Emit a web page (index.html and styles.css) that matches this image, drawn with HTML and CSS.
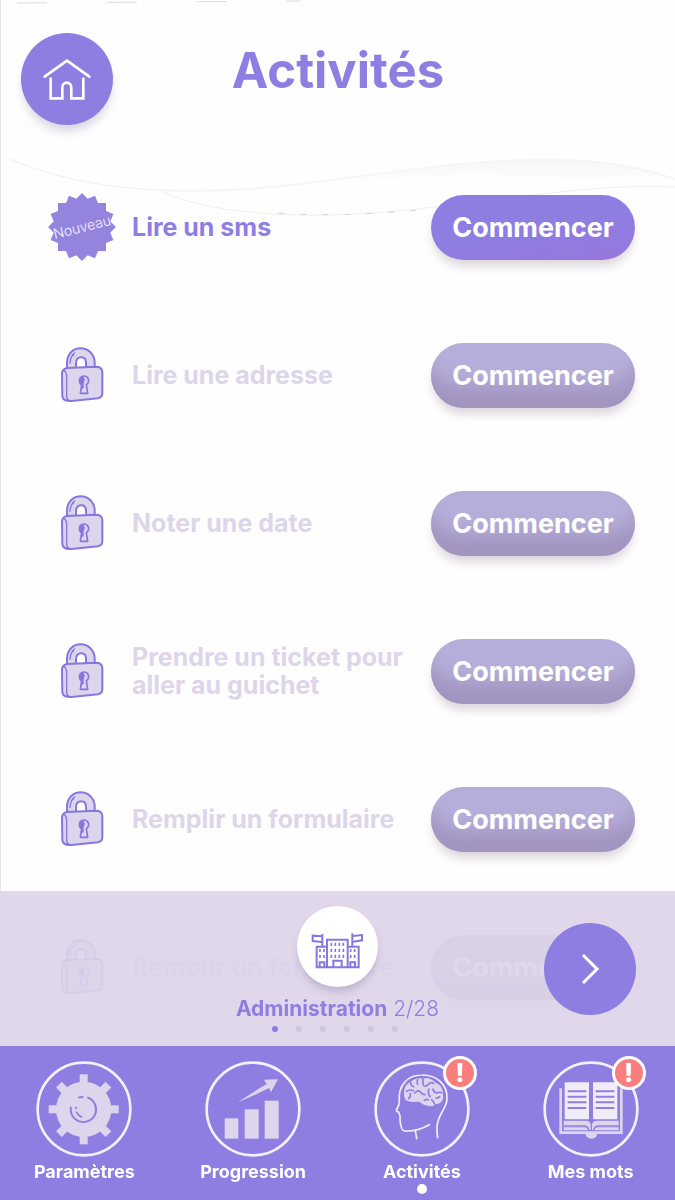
FILE: index.html
```html
<!DOCTYPE html>
<html lang="fr">

<head>
<meta charset="utf-8" />
<meta name="viewport" content="width=device-width, initial-scale=1" />
<title>Activités</title>
<link rel="stylesheet" href="styles.css">
</head>

<body>

<!-- shared symbols -->
<svg class="symbols" aria-hidden="true">
    <symbol id="lock" viewBox="30 36 132 168">
        <g stroke="#8676dd" stroke-width="6" stroke-linejoin="round" stroke-linecap="round">
            <path fill="#ddd5ec" fill-rule="evenodd" d="M51 99V82C52 56 70 40 92 40S132 56 134 80V96H108V84C108 72 102 67 94 67S78 72 78 86V98Z" />
            <path fill="none" stroke-width="4" d="M60 85C61 69 67 59 74 54M70 62V60" />
            <path fill="#ddd5ec" d="M36 118Q36 102 50 99L138 95Q155 95 157 110V175Q157 188 144 190L64 198Q39 199 37 184Z" />
            <path fill="none" stroke-width="4" d="M42 106Q50 112 50 124V184Q51 196 62 199" />
            <path fill="#ddd5ec" stroke-width="5" d="M95 149A14 14 0 1 1 109 149L113 175H91Z" />
            <path fill="#8676dd" stroke="none" d="M95 151A15 15 0 0 1 99 123Q108 133 101 144V160L93 162Z" />
        </g>
    </symbol>
</svg>

<header class="header">
    <svg class="wave" viewBox="0 0 675 230" preserveAspectRatio="none" aria-hidden="true">
        <defs>
            <linearGradient id="fade" x1="0" y1="0" x2="0" y2="1">
                <stop offset="0" stop-color="#f7f7f7" />
                <stop offset="0.7" stop-color="#fefefe" />
            </linearGradient>
        </defs>
        <path fill="url(#fade)" d="M158 190C250 194 310 182 360 176C470 162 580 146 675 179V187C560 180 460 164 340 188C270 194 210 196 158 190Z" />
        <path fill="none" stroke="#f5f5f5" stroke-width="2" d="M158 190C250 194 310 182 360 176C470 162 580 146 675 179" />
        <path fill="none" stroke="#efefef" d="M8 159C60 180 110 188 158 190C200 211 270 216 330 215C450 212 570 182 675 187" />
        <path fill="none" stroke="#d4d4d4" stroke-dasharray="6 16" d="M278 213C310 216 370 215 430 209" />
        <path fill="none" stroke="#dadada" stroke-dasharray="30 60" d="M16 3L300 1" />
    </svg>
    <a class="round home" href="#" aria-label="Accueil">
        <svg viewBox="62 98 276 278" aria-hidden="true">
            <g fill="none" stroke="#ffffff" stroke-width="8" stroke-linecap="round" stroke-linejoin="round">
                <path d="M133 229L200 181L267 229" />
                <path stroke-linejoin="miter" d="M151 235V294H186V262C186 242 213 242 213 262V294H249V235" />
            </g>
        </svg>
    </a>
    <h1 class="title">Activités</h1>
</header>

<main>
    <ul class="activities">
        <li class="activity active">
            <svg class="nouveau" viewBox="-34 -34 68 68">
                <g fill="#9484de">
                    <rect x="-24" y="-24" width="48" height="48" />
                    <rect x="-24" y="-24" width="48" height="48" transform="rotate(22.5)" />
                    <rect x="-24" y="-24" width="48" height="48" transform="rotate(45)" />
                    <rect x="-24" y="-24" width="48" height="48" transform="rotate(67.5)" />
                </g>
                <text class="nouveau-text" x="0" y="5" text-anchor="middle" transform="rotate(-14)">Nouveau</text>
            </svg>
            <span class="name">Lire un sms</span>
            <button class="start" type="button">Commencer</button>
        </li>
        <li class="activity">
            <svg class="lock" aria-hidden="true"><use href="#lock" /></svg>
            <span class="name">Lire une adresse</span>
            <button class="start" type="button" disabled>Commencer</button>
        </li>
        <li class="activity">
            <svg class="lock" aria-hidden="true"><use href="#lock" /></svg>
            <span class="name">Noter une date</span>
            <button class="start" type="button" disabled>Commencer</button>
        </li>
        <li class="activity">
            <svg class="lock" aria-hidden="true"><use href="#lock" /></svg>
            <span class="name">Prendre un ticket pour aller au guichet</span>
            <button class="start" type="button" disabled>Commencer</button>
        </li>
        <li class="activity">
            <svg class="lock" aria-hidden="true"><use href="#lock" /></svg>
            <span class="name">Remplir un formulaire</span>
            <button class="start" type="button" disabled>Commencer</button>
        </li>
        <li class="activity">
            <svg class="lock" aria-hidden="true"><use href="#lock" /></svg>
            <span class="name">Remplir un formulaire</span>
            <button class="start" type="button" disabled>Commencer</button>
        </li>
    </ul>
</main>

<div class="bottom">
    <section class="category">
        <div class="category-info">
            <svg class="category-icon" viewBox="21 31 243 243" aria-hidden="true">
                <g fill="none" stroke="#8676dd" stroke-width="6">
                    <path d="M111 215V132H173V215M80 215V153H111M173 153H206V215M77 215H209" />
                    <path d="M97 153V115M95 122L68 120V136L95 139" />
                    <path d="M187 153V113M189 121L216 118V134L189 138" />
                    <path d="M130 214V195H155V214M89 214V200H103V214M181 214V200H195V214" />
                    <path stroke-width="5" stroke-dasharray="10 8" d="M124 141V192M136 141V192M148 141V192M160 141V192" />
                    <path stroke-width="5" stroke-dasharray="9 9" d="M90 160V190M102 160V190M182 160V190M194 160V190" />
                </g>
            </svg>
            <p class="category-name"><strong>Administration</strong> 2/28</p>
            <div class="dots">
                <span class="dot current"></span>
                <span class="dot"></span>
                <span class="dot"></span>
                <span class="dot"></span>
                <span class="dot"></span>
                <span class="dot"></span>
            </div>
        </div>
        <button class="round next" type="button" aria-label="Suivant">
            <svg viewBox="0 0 92 92" aria-hidden="true">
                <path fill="none" stroke="#ffffff" stroke-width="3" d="M39 32L53 46L39 60" />
            </svg>
        </button>
    </section>

    <nav class="tabs">
        <a class="tab" href="#">
            <span class="tab-icon">
                <svg viewBox="49 32 288 288" aria-hidden="true">
                    <circle class="ring" cx="193" cy="176" r="139" />
                    <g fill="#ddd5ec">
                        <circle cx="192" cy="177" r="83" />
                        <g id="teeth">
                            <rect x="180" y="72" width="24" height="210" />
                            <rect x="87" y="165" width="210" height="24" />
                        </g>
                        <use href="#teeth" transform="rotate(45 192 177)" />
                    </g>
                    <path fill="none" stroke="#8e7ee2" stroke-width="6" d="M154 169A38 38 0 1 0 203 141M176 142Q184 139 191 140" />
                    <path fill="none" stroke="#8e7ee2" stroke-width="5" d="M169 169V176M170 184Q176 198 188 200" />
                </svg>
            </span>
            Paramètres
        </a>
        <a class="tab" href="#">
            <span class="tab-icon">
                <svg viewBox="75 32 288 288" aria-hidden="true">
                    <circle class="ring" cx="219" cy="176" r="139" />
                    <g fill="#ddd5ec">
                        <rect x="134" y="204" width="41" height="61" />
                        <rect x="194" y="177" width="42" height="88" />
                        <rect x="254" y="151" width="42" height="114" />
                        <path d="M174 156Q220 124 260 101L252 88L294 87L273 125L267 113Q222 136 174 156Z" />
                    </g>
                </svg>
            </span>
            Progression
        </a>
        <a class="tab selected" href="#" aria-current="page">
            <span class="tab-icon">
                <svg viewBox="71 32 288 288" aria-hidden="true">
                    <circle class="ring" cx="215" cy="176" r="139" />
                    <path fill="none" stroke="#f3effb" stroke-width="5" stroke-linecap="round" stroke-linejoin="round" d="M147 151C143 105 172 74 214 74C259 73 292 103 290 145C289 178 262 190 260 229Q259 247 262 262M147 151C148 164 143 170 138 179Q138 184 145 185Q151 197 149 207Q149 218 153 230Q154 244 172 242Q205 241 237 223M195 240L199 265" />
                    <path fill="#ddd5ec" d="M163 143C156 120 166 100 180 96C190 83 207 82 218 85C235 79 247 88 254 96C270 102 280 117 277 131C283 148 272 162 256 161Q249 170 237 167C224 166 216 162 208 155C195 153 184 158 172 151Q164 151 163 143Z" />
                    <path fill="none" stroke="#8e7ee2" stroke-width="5" stroke-linecap="round" d="M181 97Q181 106 190 109M169 123Q177 116 189 121M175 145Q182 138 180 130M202 88Q199 95 202 102M193 128Q204 117 210 125T224 133M218 87V103Q224 113 234 102Q243 94 250 99M236 116Q231 127 239 139M248 116Q250 127 260 128Q268 124 274 127M222 150Q230 145 234 149M252 160Q249 151 244 148M257 143Q263 144 268 139" />
                </svg>
                <span class="alert">!</span>
            </span>
            Activités
        </a>
        <a class="tab" href="#">
            <span class="tab-icon">
                <svg viewBox="53 32 288 288" aria-hidden="true">
                    <circle class="ring" cx="197" cy="176" r="139" />
                    <path fill="#ddd5ec" d="M180 249H216Q214 265 198 265Q183 265 180 249Z" />
                    <path fill="none" stroke="#ddd5ec" stroke-width="8" d="M106 114V247H288V114" />
                    <path fill="#f0ecf8" d="M118 96H191V207H118ZM203 96H276V207H203Z" />
                    <path fill="#ddd5ec" d="M115 211H180Q196 211 196 224V239H190Q188 229 180 229H115ZM280 211H216Q200 211 200 224V239H206Q208 229 216 229H280Z" />
                    <path fill="#ddd5ec" d="M115 231H178Q187 231 189 240H115ZM280 231H218Q208 231 206 240H280Z" />
                    <path stroke="#8e7ee2" stroke-width="4" fill="none" d="M115 227H178Q188 228 190 239M280 227H218Q207 228 205 239" />
                    <path stroke="#8e7ee2" stroke-width="6" d="M127 123H183M127 139H183M127 156H183M127 173H183M211 123H267M211 139H267M211 156H267M211 173H267" />
                </svg>
                <span class="alert">!</span>
            </span>
            Mes mots
        </a>
    </nav>
</div>

</body>
</html>
```
FILE: styles.css
```css
* {
    box-sizing: border-box;
}

body {
    margin: 0;
    min-height: 100vh;
    border-left: 1px solid #e4e4e4;
    background: #fefefe;
    color: #8e7ee2;
    font-family: Inter, "Open Sans", Arial, sans-serif;
}

svg {
    display: block;
}

.symbols {
    position: absolute;
    width: 0;
    height: 0;
}

/* Header */

.header {
    position: relative;
    display: grid;
    grid-template-columns: 1fr auto 1fr;
    align-items: start;
    height: 153px;
    padding: 33px 20px 0;
}

.wave {
    position: absolute;
    top: 0;
    left: 0;
    width: 100%;
    height: 230px;
}

.round {
    position: relative;
    display: block;
    width: 92px;
    height: 92px;
    padding: 0;
    border: 0;
    border-radius: 50%;
    background: #8e7ee2;
}

.home {
    box-shadow: 0 8px 10px -2px rgba(60, 50, 110, 0.2);
}

.title {
    position: relative;
    margin: 0;
    font-size: 49px;
    font-weight: 700;
    line-height: 76px;
}

/* List of activities */

.activities {
    margin: 0;
    padding: 0 40px;
    list-style: none;
}

.activity {
    position: relative;
    display: grid;
    grid-template-columns: 82px 1fr 204px;
    column-gap: 9px;
    align-items: center;
    height: 148px;
    color: #ddd5ea;
}

.activity.active {
    color: #8e7ee2;
}

.lock {
    justify-self: center;
    width: 44px;
    height: 56px;
}

.nouveau {
    justify-self: center;
    width: 68px;
    height: 68px;
}

.nouveau-text {
    fill: #f3effb;
    font-size: 14px;
    font-weight: 300;
}

.name {
    font-size: 25px;
    font-weight: 700;
    line-height: 28px;
}

.start {
    height: 65px;
    padding: 0;
    border: 0;
    border-radius: 33px;
    background: linear-gradient(170deg, #8e7ee2 50%, #9478de 85%, #9d74d4);
    box-shadow: 0 8px 10px -2px rgba(80, 50, 80, 0.2);
    color: #ffffff;
    font-family: inherit;
    font-size: 27px;
    font-weight: 700;
}

.start:disabled {
    background: #b6aeda;
    box-shadow: inset 0 -32px 18px -10px #a295c0, 0 8px 10px -2px rgba(80, 50, 80, 0.2);
}

/* Category bar and tabs, over the end of the list */

.bottom {
    position: fixed;
    right: 0;
    bottom: 0;
    left: 0;
}

.category {
    display: grid;
    grid-template-columns: 1fr auto 1fr;
    align-items: center;
    height: 155px;
    padding: 0 39px;
    background: rgba(221, 212, 232, 0.92);
}

.category-info {
    grid-column: 2;
    display: flex;
    flex-direction: column;
    align-items: center;
}

.category-icon {
    width: 81px;
    height: 81px;
    border-radius: 50%;
    background: #ffffff;
    box-shadow: 0 6px 8px -2px rgba(60, 50, 110, 0.25);
}

.category-name {
    margin: 10px 0 5px;
    font-size: 21px;
    font-weight: 300;
    line-height: 24px;
}

.category-name strong {
    font-weight: 700;
}

.dots {
    display: flex;
    gap: 18px;
    margin-right: 5px;
}

.dot {
    width: 6px;
    height: 6px;
    border-radius: 50%;
    background: #d0c6de;
}

.dot.current {
    background: #8e7ee2;
}

.next {
    justify-self: end;
}

.tabs {
    display: grid;
    grid-template-columns: repeat(4, 1fr);
    height: 154px;
    padding-top: 15px;
    background: #8e7ee2;
}

.tab {
    display: flex;
    flex-direction: column;
    align-items: center;
    color: #ffffff;
    font-size: 18px;
    font-weight: 700;
    line-height: 20px;
    text-decoration: none;
}

.tab-icon {
    position: relative;
    width: 96px;
    height: 96px;
    margin-bottom: 5px;
}

.ring {
    fill: none;
    stroke: #f3effb;
    stroke-width: 8;
}

.tab.selected::after {
    content: "";
    width: 10px;
    height: 10px;
    margin-top: 2px;
    border-radius: 50%;
    background: #ffffff;
}

.alert {
    position: absolute;
    top: -5px;
    right: -7px;
    width: 34px;
    height: 34px;
    border: 3px solid #ffffff;
    border-radius: 50%;
    background: #fb7e7e;
    font-size: 26px;
    font-weight: 800;
    line-height: 28px;
    text-align: center;
}
```
